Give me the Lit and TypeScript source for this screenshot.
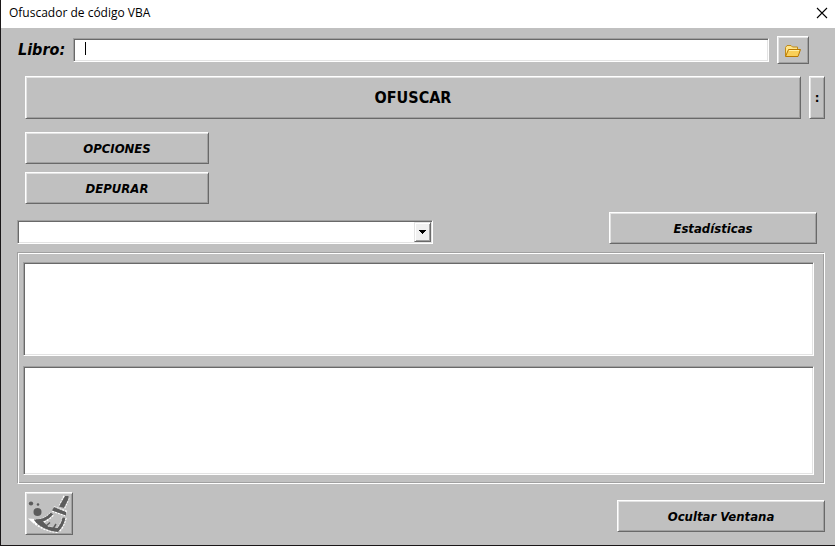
import { LitElement, html, css } from "lit";
import { customElement } from "lit/decorators.js";

@customElement("app-root")
export class AppRoot extends LitElement {
  static styles = css`
    :host {
      display: block;
      min-height: 100vh;
      background: #fff;
      color: #000;
      font-family: "DejaVu Sans Condensed", "DejaVu Sans", Tahoma, sans-serif;
      font-stretch: condensed;
    }
    * {
      box-sizing: border-box;
    }
    .window {
      display: flex;
      flex-direction: column;
      min-height: calc(100vh - 1px);
      border-left: 1px solid #1a1718;
      border-bottom: 1px solid #1a1718;
      background: #c0c0c0;
    }
    .titlebar {
      display: flex;
      align-items: center;
      justify-content: space-between;
      height: 28px;
      padding: 0 7px 2px 8px;
      background: #fff;
    }
    .title {
      margin: 0;
      font: 400 12px/16px "Open Sans", "Noto Sans", sans-serif;
    }
    .close {
      display: flex;
      padding: 0;
      border: 0;
      background: none;
    }
    .form {
      display: flex;
      flex: 1;
      flex-direction: column;
      padding: 8px 10px 10px 16px;
    }
    .row {
      display: flex;
      gap: 8px;
    }
    .btn {
      display: flex;
      align-items: center;
      justify-content: center;
      height: 32px;
      padding: 1px 0 0;
      border: 1px solid;
      border-color: #fff #696969 #696969 #fff;
      border-radius: 0;
      background: #c0c0c0;
      box-shadow: inset 1px 1px #e3e3e3, inset -1px -1px #a0a0a0;
      color: #000;
      font: italic 700 13px/16px "DejaVu Sans Condensed", "DejaVu Sans", sans-serif;
      font-stretch: condensed;
    }
    .btn:focus-visible {
      outline: 1px dotted #000;
      outline-offset: -5px;
    }
    .sunken {
      border: 1px solid;
      border-color: #a0a0a0 #fff #fff #a0a0a0;
      border-radius: 0;
      background: #fff;
      box-shadow: inset 1px 1px #696969, inset -1px -1px #e3e3e3;
      outline: none;
    }
    .book {
      padding-right: 16px;
      align-items: center;
    }
    .label {
      padding-left: 1px;
      font: italic 700 16px/24px "DejaVu Sans Condensed", "DejaVu Sans", sans-serif;
      font-stretch: condensed;
    }
    .field {
      position: relative;
      display: flex;
      flex: 1;
    }
    .text {
      flex: 1;
      min-width: 0;
      height: 24px;
      padding: 0 12px;
      font: 13px/16px "DejaVu Sans Condensed", sans-serif;
    }
    .caret {
      position: absolute;
      left: 12px;
      top: 4px;
      width: 1px;
      height: 13px;
      background: #000;
    }
    .browse {
      width: 32px;
      height: 28px;
    }
    .run {
      margin-top: 12px;
      padding-left: 8px;
    }
    .main {
      flex: 1;
      height: 43px;
      font-size: 16px;
      font-style: normal;
    }
    .more {
      width: 16px;
      height: 43px;
      font-style: normal;
    }
    .side {
      display: flex;
      flex-direction: column;
      gap: 8px;
      width: 192px;
      margin-top: 13px;
      padding-left: 8px;
    }
    .pick {
      justify-content: space-between;
      align-items: flex-end;
      margin-top: 8px;
      padding-right: 8px;
    }
    .combo {
      position: relative;
      display: flex;
      width: 52%;
      height: 24px;
    }
    .select {
      flex: 1;
      appearance: none;
      padding: 0 20px 0 4px;
      font: 13px/16px "DejaVu Sans Condensed", sans-serif;
    }
    .arrow {
      position: absolute;
      top: 2px;
      right: 2px;
      bottom: 2px;
      display: flex;
      align-items: center;
      justify-content: center;
      width: 17px;
      border: 1px solid;
      border-color: #e3e3e3 #696969 #696969 #e3e3e3;
      background: #f0f0f0;
      box-shadow: inset 1px 1px #fff, inset -1px -1px #a0a0a0;
      pointer-events: none;
    }
    .wide {
      width: 208px;
    }
    .frame {
      display: flex;
      flex: 1;
      flex-direction: column;
      gap: 10px;
      min-width: 0;
      margin: 8px 0;
      padding: 9px 10px 8px 5px;
      border: 1px solid;
      border-color: #a0a0a0 #fff #fff #a0a0a0;
      box-shadow: inset 1px 1px #fff, inset -1px -1px #a0a0a0;
    }
    .list {
      display: block;
      width: 100%;
      min-height: 60px;
      margin: 0;
      padding: 4px;
      resize: none;
      font: 13px/16px "DejaVu Sans Condensed", sans-serif;
    }
    .modules {
      flex: 6 1 0;
    }
    .output {
      flex: 7 1 0;
    }
    .bottom {
      justify-content: space-between;
      align-items: flex-start;
      padding-left: 8px;
    }
    .clean {
      width: 48px;
      height: 43px;
    }
    .hide {
      margin-top: 8px;
    }
  `;

  render() {
    return html`
      <main class="window">
        <header class="titlebar">
          <h1 class="title">Ofuscador de código VBA</h1>
          <button class="close" aria-label="Cerrar">
            <svg width="12" height="12" viewBox="0 0 12 12" fill="none" stroke="#000" stroke-width="1.1">
              <path d="M1 1 11 11M11 1 1 11" />
            </svg>
          </button>
        </header>
        <div class="form">
          <div class="row book">
            <label class="label" for="book">Libro:</label>
            <div class="field">
              <input class="text sunken" id="book" type="text" />
              <span class="caret"></span>
            </div>
            <button class="btn browse" aria-label="Examinar">
              <svg width="18" height="14" viewBox="0 0 18 14">
                <path d="M1.500 12V3.500L3 1.500H7L8.500 3H13.500V6" fill="#ffe48a" stroke="#c08a18" />
                <path d="M1.500 12.500 4.500 5.500H16.500L14 12.500Z" fill="#f9cf58" stroke="#b87800" />
                <path d="M5 6.500H15" stroke="#fff0a8" />
              </svg>
            </button>
          </div>
          <div class="row run">
            <button class="btn main">OFUSCAR</button>
            <button class="btn more">:</button>
          </div>
          <div class="side">
            <button class="btn">OPCIONES</button>
            <button class="btn">DEPURAR</button>
          </div>
          <div class="row pick">
            <div class="combo">
              <select class="select sunken" aria-label="Módulo"></select>
              <span class="arrow">
                <svg width="7" height="4" viewBox="0 0 7 4" shape-rendering="crispEdges">
                  <path d="M0 0H7V1H6V2H5V3H4V4H3V3H2V2H1V1H0Z" />
                </svg>
              </span>
            </div>
            <button class="btn wide">Estadísticas</button>
          </div>
          <section class="frame">
            <textarea class="list sunken modules" aria-label="Módulos"></textarea>
            <textarea class="list sunken output" aria-label="Resultado"></textarea>
          </section>
          <div class="row bottom">
            <button class="btn clean" aria-label="Limpiar">
              <svg width="42" height="38" viewBox="0 0 42 38">
                <g fill="none" stroke="#fff" stroke-dasharray="2 1">
                  <path d="M24 19C19 24 14 27 7 26.500C12 31 20 34.500 30 35.500C33 32 35 28 36.500 22" stroke-width="5" />
                  <path d="M38.500 2 34 12" stroke-width="7" />
                  <path d="M25 14 38 18.500" stroke-width="6" />
                </g>
                <g fill="#5c5c5c">
                  <ellipse cx="3" cy="8.500" rx="2.200" ry="2" />
                  <circle cx="10" cy="9.500" r="1.300" />
                  <circle cx="9.500" cy="17" r="4" />
                  <path d="M37 1H40.500V4L36 13 31 11.500Z" />
                  <path d="M26 12 38 17V20.500L24 15.500Z" />
                  <path d="M6 24.500H13L20 31.500 31 33.500 30 37C20 36 11 32 6 25Z" />
                </g>
                <g fill="none" stroke="#5c5c5c" stroke-width="3">
                  <path d="M24 18.500C20 23 14 26 8 26" />
                  <path d="M29 35.500C33 32 35 28 36 22.500" />
                  <path d="M18 31 22 27.500M25 34 28 29" stroke-width="1.500" />
                </g>
              </svg>
            </button>
            <button class="btn wide hide">Ocultar Ventana</button>
          </div>
        </div>
      </main>
    `;
  }
}
